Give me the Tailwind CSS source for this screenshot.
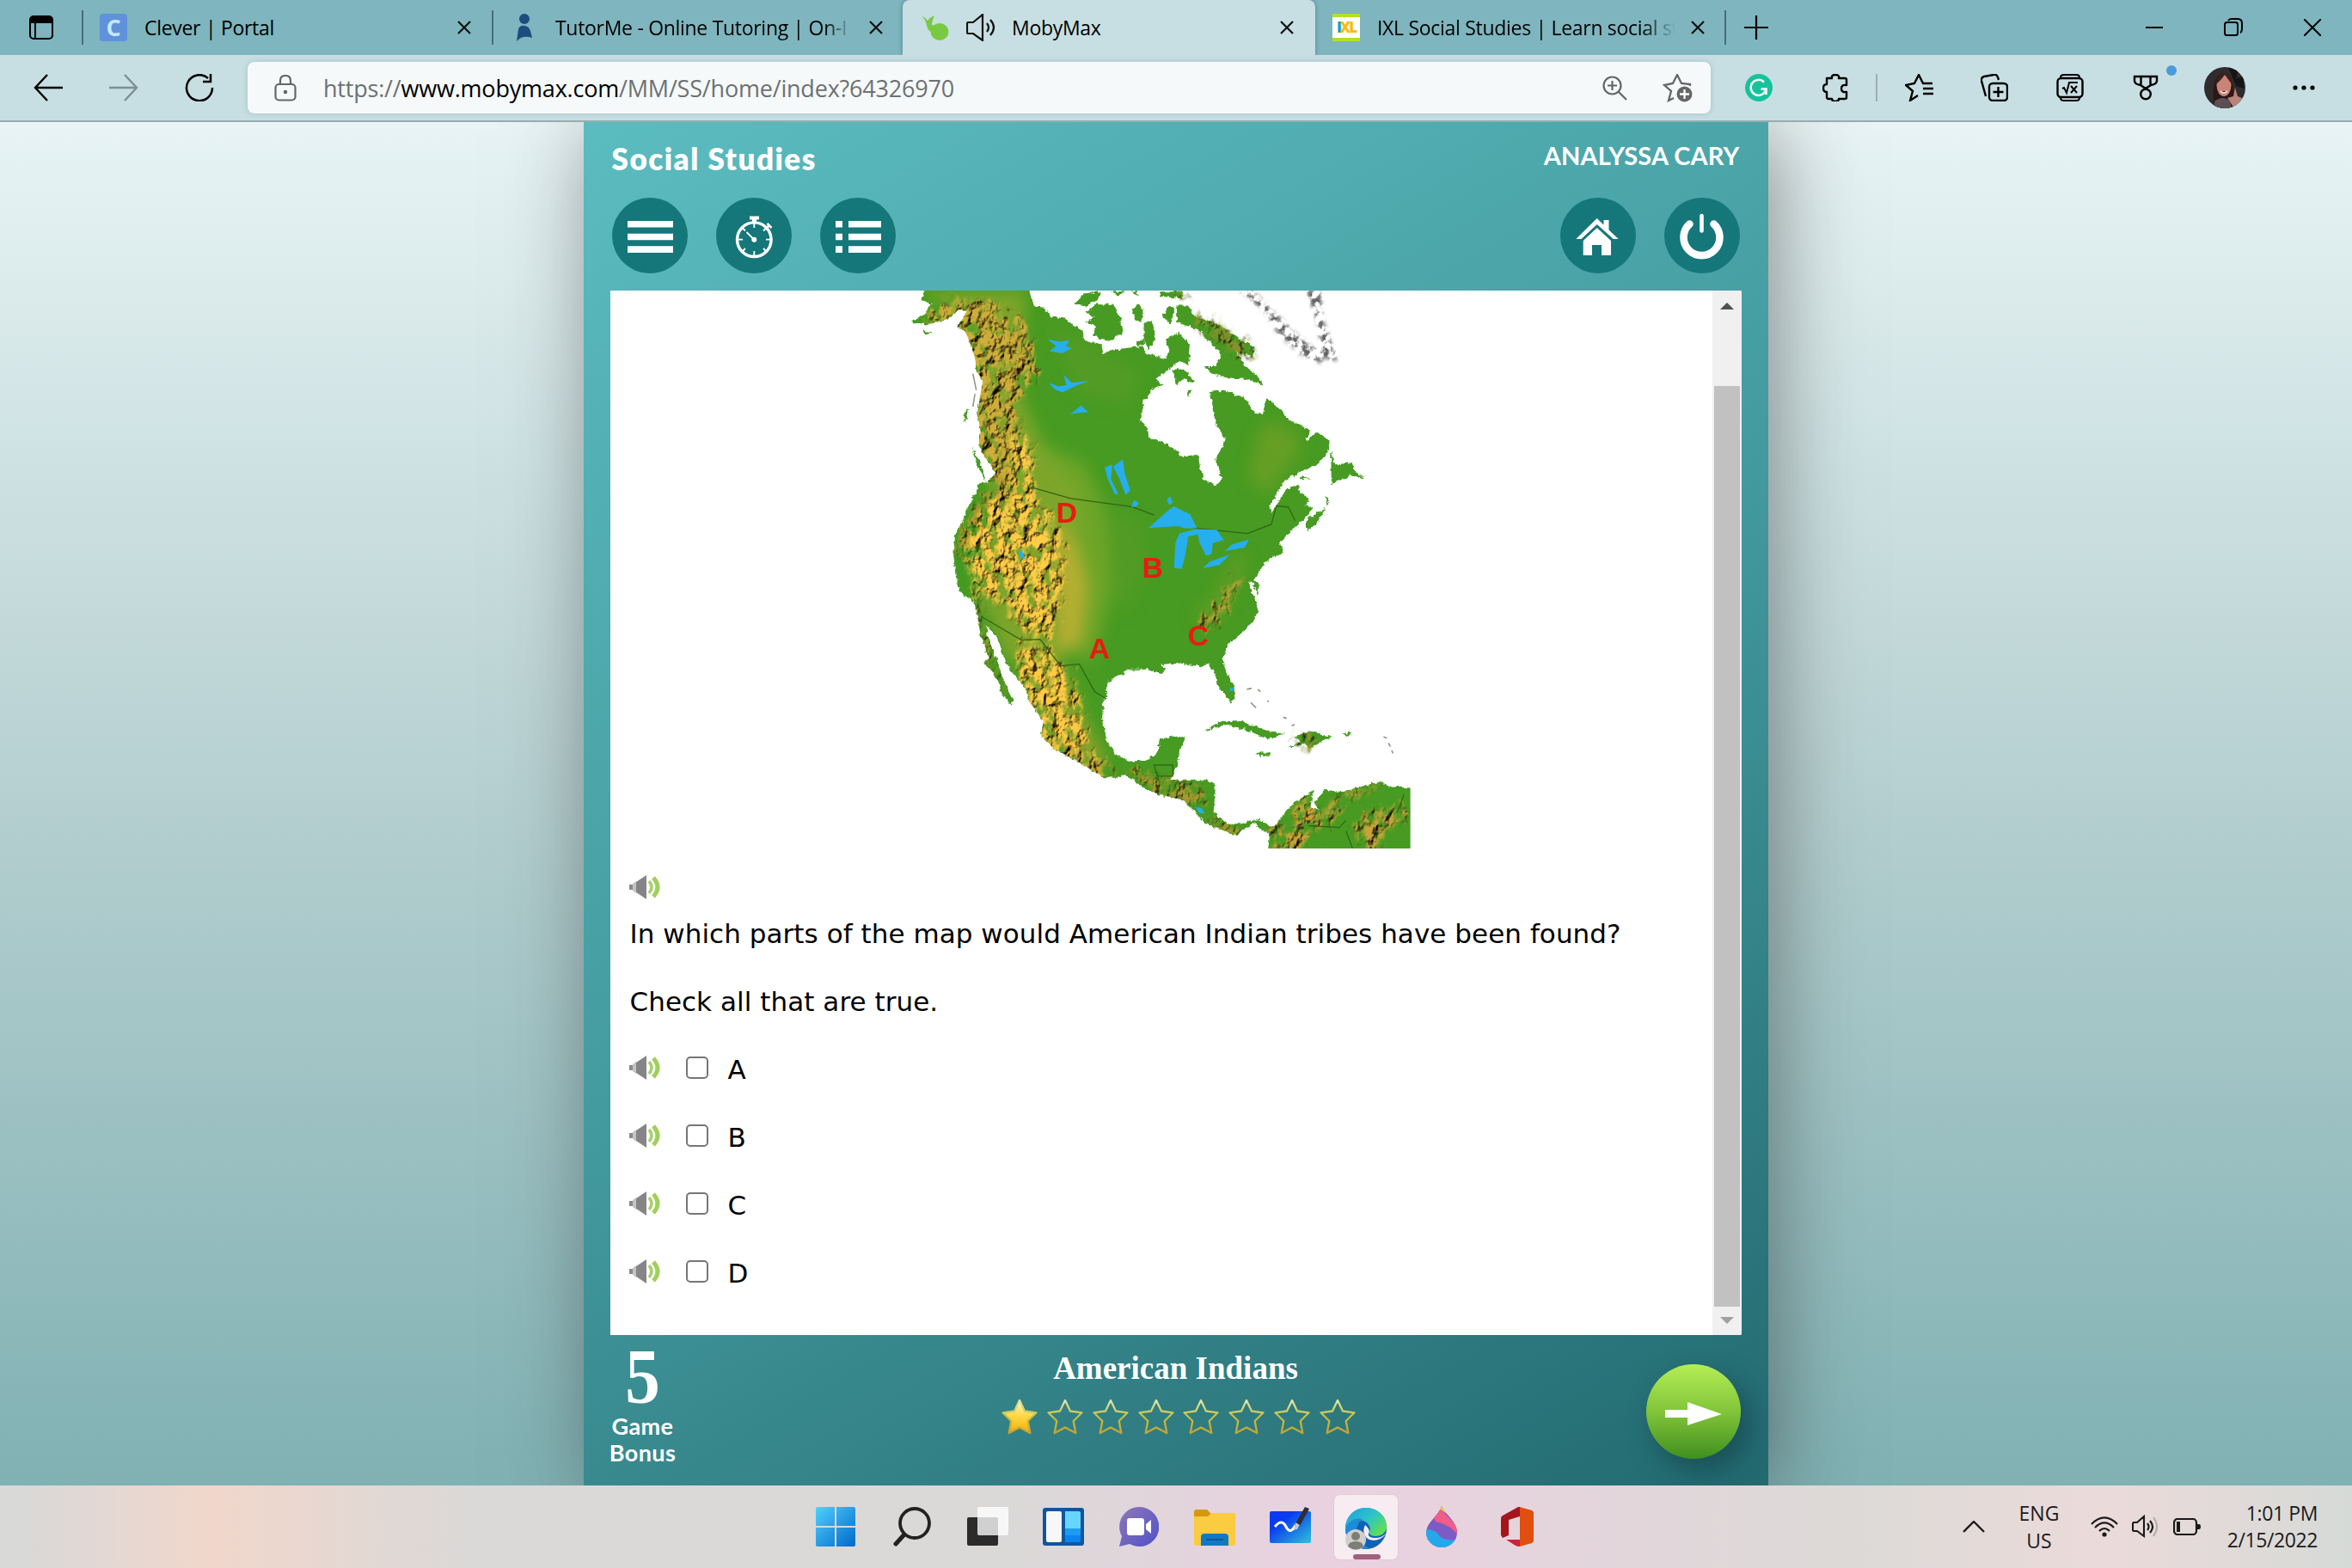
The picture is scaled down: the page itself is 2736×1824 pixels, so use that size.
<!DOCTYPE html>
<html lang="en">
<head>
    <meta charset="UTF-8">
    <meta name="viewport" content="width=device-width, initial-scale=1.0">
    <title>MobyMax</title>
    <script src="https://cdn.jsdelivr.net/npm/@tailwindcss/browser@4"></script>
</head>
<body class="w-[2736px] h-[1824px] overflow-hidden flex flex-col font-['Open_Sans','Noto_Sans',sans-serif] text-black">

    <!-- Shared symbols -->
    <svg class="hidden">
        <symbol id="x" viewBox="0 0 18 18"><path d="M2 2l14 14M16 2L2 16" stroke="#111" stroke-width="2.2" fill="none"/></symbol>
        <symbol id="audio" viewBox="0 0 36 28">
            <path d="M0 11h4v6H0z" fill="#8a8a8a"/><path d="M4 10l4-3v14l-4-3z" fill="#c4c4c4"/>
            <path d="M8 8L20 0v28L8 20z" fill="#858589"/>
            <path d="M23 7q6 7 0 14" stroke="#a5d468" stroke-width="3.600" fill="none"/>
            <path d="M28 3q10 11 0 22" stroke="#a0d05c" stroke-width="5" fill="none"/>
        </symbol>
    </svg>

    <!-- Tab strip -->
    <header class="h-16 shrink-0 bg-[#7eb5be] flex items-center text-[23px] tracking-[-0.3px] whitespace-nowrap">
        <div class="w-[95px] pl-[34px] shrink-0">
            <svg class="w-7 h-7" viewBox="0 0 28 28"><rect x="1" y="1" width="26" height="26" rx="4" fill="none" stroke="#000" stroke-width="2"/><path d="M1 9V5q0-4 4-4h18q4 0 4 4v4z"/><path d="M7 8v19" stroke="#000" stroke-width="2"/></svg>
        </div>
        <div class="w-[479px] h-10 shrink-0 border-x-2 border-[#466e77] flex items-center pl-[19px] pr-[23px]">
            <div class="size-8 rounded bg-[#5f92da] text-[#c5e8fa] font-bold text-[27px] leading-8 text-center">C</div>
            <div class="ml-5 flex-1">Clever | Portal</div>
            <svg class="size-[18px]"><use href="#x"/></svg>
        </div>
        <div class="w-[476px] h-10 shrink-0 flex items-center pl-[26px] pr-[22px]">
            <svg class="w-[20px] h-8 shrink-0" viewBox="0 0 20 32" fill="#1d4d7e"><circle cx="10" cy="6" r="6"/><path d="M1 32L3 18q2-5 7-4 5 0 7 6l2 8q-11-4-18 4z"/></svg>
            <div class="ml-[26px] w-[348px] mask-r-from-90% mask-r-to-99%">TutorMe - Online Tutoring | On-I</div>
            <svg class="size-[18px] ml-auto shrink-0"><use href="#x"/></svg>
        </div>
        <div class="w-[480px] h-16 shrink-0 rounded-t-lg bg-[#c7dfe3] shadow-[0_0_5px_rgba(20,60,70,0.45)] flex items-center pl-[22px] pr-6">
            <svg class="size-8" viewBox="0 0 32 32" fill="#7ac943"><ellipse cx="21" cy="21" rx="10.500" ry="10" /><path d="M12 22C3 16 9 12 0 2q5 3 7 6 3-4 8-6-3 7-3 11l8 2z"/></svg>
            <svg class="w-[34px] h-8 ml-5" viewBox="0 0 34 32" fill="none" stroke="#111" stroke-width="2.200"><path d="M2 10h6L19 1v30L8 23H2q-1 0-1-2v-9q0-2 1-2zM24 11q4 5 0 10M28 7q8 9 0 18"/></svg>
            <div class="ml-[19px] flex-1">MobyMax</div>
            <svg class="size-[18px]"><use href="#x"/></svg>
        </div>
        <div class="w-[478px] h-10 shrink-0 border-r-2 border-[#466e77] flex items-center pl-5 pr-[22px]">
            <div class="size-8 shrink-0 bg-white border-y-4 border-[#b5e021] text-[17px] leading-6 font-extrabold text-center tracking-[-2px] text-[#fdb913]"><span class="text-[#0aa0d8]">I</span>XL</div>
            <div class="ml-5 w-[350px] mask-r-from-88% mask-r-to-99%">IXL Social Studies | Learn social st</div>
            <svg class="size-[18px] ml-auto shrink-0"><use href="#x"/></svg>
        </div>
        <svg class="size-7 ml-[21px]" viewBox="0 0 28 28" stroke="#000" stroke-width="2.200"><path d="M14 0v28M0 14h28"/></svg>
        <div class="ml-auto mr-9 flex items-center gap-[71px]">
            <svg class="w-5 h-5" viewBox="0 0 20 20"><path d="M0 10h20" stroke="#000" stroke-width="2"/></svg>
            <svg class="w-[22px] h-[22px]" viewBox="0 0 22 22" fill="none" stroke="#000" stroke-width="2"><rect x="1" y="5" width="15" height="15" rx="2.500"/><path d="M5 3q1-2 4-2h7q5 0 5 5v6q0 4-2 5"/></svg>
            <svg class="w-5 h-5" viewBox="0 0 20 20"><path d="M0 0l20 20M20 0L0 20" stroke="#000" stroke-width="2"/></svg>
        </div>
    </header>

    <!-- Toolbar -->
    <nav class="relative h-[78px] shrink-0 bg-[#c7dfe3] border-b-2 border-[#9aabb0] flex items-center">
        <svg class="w-[34px] h-8 ml-[39px]" viewBox="0 0 34 32" fill="none" stroke="#000" stroke-width="2.400"><path d="M16 1L2 16l14 15M2 16h32"/></svg>
        <svg class="w-[34px] h-8 ml-[54px]" viewBox="0 0 34 32" fill="none" stroke="#7b9096" stroke-width="2.400"><path d="M18 1l14 15-14 15M32 16H0"/></svg>
        <svg class="w-[34px] h-8 ml-[54px]" viewBox="0 0 34 32" fill="none" stroke="#000" stroke-width="2.500"><path d="M32 16a15 15 0 1 1-5-11M30 0v9h-9"/></svg>
        <div class="ml-[39px] w-[1702px] h-[60px] rounded-lg bg-[#f5f9fa] shadow-[0_0_6px_rgba(60,100,110,0.25)] flex items-center text-[#6d7173]">
            <svg class="w-[26px] h-[31px] ml-[31px]" viewBox="0 0 26 31" fill="none" stroke="#666" stroke-width="2.200"><rect x="1.500" y="11" width="23" height="18.500" rx="4"/><path d="M7 11V7q0-6 6-6t6 6v4"/><circle cx="13" cy="20" r="1.200" fill="#666"/></svg>
            <div class="ml-[31px] flex-1 text-[27px] leading-none tracking-[-0.2px]">https://<span class="text-black">www.mobymax.com</span>/MM/SS/home/index?64326970</div>
            <svg class="w-[29px] h-[29px] mr-[41px]" viewBox="0 0 29 29" fill="none" stroke="#666" stroke-width="2.200"><circle cx="11.500" cy="11.500" r="10"/><path d="M19 19l9 9M11.500 6v11M6 11.500h11"/></svg>
            <svg class="w-9 h-[33px] mr-5" viewBox="0 0 36 33" fill="none" stroke="#666" stroke-width="2.300"><path d="M32 14v-2l-10-1-5-10-5 10-10 2 8 7-3 11 6-3"/><circle cx="25.500" cy="23.500" r="9" fill="#666" stroke="none"/><path d="M25.500 18v11M20 23.500h11" stroke="#fff"/></svg>
        </div>
        <svg class="size-8 ml-10" viewBox="0 0 32 32" fill="none"><circle cx="16" cy="16" r="16" fill="#15c39a"/><path d="M22 9.500a9 9 0 1 0 2.500 8h-6M24.500 17.500v6.500" stroke="#fff" stroke-width="2.500"/></svg>
        <svg class="w-[30px] h-8 ml-[58px]" viewBox="0 0 30 32" fill="none" stroke="#000" stroke-width="2.400" stroke-linejoin="round"><path d="M5 5h6q-1-4 4-4t4 4h7q2 0 2 2v6q-6-1-6 4t6 4v6q0 2-2 2h-7q0 3-4 3t-4-3H7q-2 0-2-2v-6q-4 0-4-4.500T5 12z"/></svg>
        <div class="w-[2px] h-8 bg-[#9aaeb3] ml-[32px]"></div>
        <svg class="w-[33px] h-8 ml-8" viewBox="0 0 33 32" fill="none" stroke="#000" stroke-width="2.400"><path d="M32 11H21L16 1l-5 10-10 2 8 7-3 11 9-6M21 17h12M21 23h12"/></svg>
        <svg class="w-8 h-8 ml-[55px]" viewBox="0 0 32 32" fill="none" stroke="#000" stroke-width="2.400"><rect x="10" y="11" width="21" height="20" rx="4"/><path d="M20.500 15v12M14.500 21h12M6 26L1 8q-1-4 3-5l11-2q4-1 5 3l1 3"/></svg>
        <svg class="w-8 h-8 ml-14" viewBox="0 0 32 32" fill="none" stroke="#000" stroke-width="2.400"><rect x="1.500" y="5" width="29" height="22" rx="4"/><path d="M5 4q0-3 4-3h14q4 0 4 3M5 28q0 3 4 3h14q4 0 4-3M7 17l2-1 3 6 3-12h10M17 14l7 8M24 14l-7 8" stroke-width="2"/></svg>
        <svg class="w-[30px] h-[30px] ml-[57px]" viewBox="0 0 30 30" fill="none" stroke="#000" stroke-width="2.400"><path d="M2 2h26v5q0 4-7 5l-6 4-6-4Q2 11 2 7zM9.500 2v10M20.500 2v10"/><circle cx="15" cy="22.500" r="5.800"/></svg>
        <svg class="size-12 ml-[53px] rounded-full" viewBox="0 0 48 48"><rect width="48" height="48" fill="#302b2d"/><path d="M28 0l12 4-3 9 9-2v14l-9-3z" fill="#151515"/><path d="M12 48Q8 24 15 12q8-11 16 2 5 15 3 34z" fill="#2c1717"/><ellipse cx="23" cy="21" rx="8.500" ry="13" fill="#c98477"/><path d="M14 20q2-14 10-13 8 0 9 14-6-8-9-12-4 6-10 11" fill="#3b201f"/><path d="M19 28q4 4 8 0" stroke="#f2d5d2" stroke-width="2"/><path d="M35 48l-8-12 7-2 2-10 3 10 7 3-5 9z" fill="#b98479"/><path d="M12 40q10-8 18 0l2 8H12z" fill="#5c4f54"/></svg>
        <svg class="w-[28px] h-2 ml-[54px]" viewBox="0 0 28 8"><circle cx="4" cy="4" r="2.600"/><circle cx="14" cy="4" r="2.600"/><circle cx="24" cy="4" r="2.600"/></svg>
        <div class="absolute left-[2520px] top-3 size-3 rounded-full bg-[#4a9bd8]"></div>
    </nav>

    <!-- Lesson page -->
    <main class="h-[1586px] shrink-0 overflow-hidden bg-linear-to-b from-[#e8f4f5] via-[#b5cfd0] to-[#80b1b3] flex justify-center">
        <section class="w-[1378px] -ml-px h-full bg-linear-150 from-[#5bbcbf] via-[#439a9e] to-[#226a70] shadow-[10px_10px_90px_rgba(50,50,50,0.5)] px-[31px] text-white font-['Lato',sans-serif]">
            <div class="h-[88px] flex justify-between px-[2px]">
                <h1 class="text-[35px] leading-[84px] font-extrabold tracking-[1.5px]">Social Studies</h1>
                <div class="text-[29px] leading-[78px] font-bold tracking-[0.1px]">ANALYSSA CARY</div>
            </div>
            <div class="h-[108px] flex gap-[33px] px-[2px]">
                <svg class="size-[88px]" viewBox="0 0 88 88" fill="#fff"><circle cx="44" cy="44" r="44" fill="#15777a"/><path d="M18 27h53v7.500H18zM18 41.700h53v7.500H18zM18 56.300h53V64H18z"/></svg>
                <svg class="size-[88px]" viewBox="0 0 88 88" fill="none" stroke="#fff"><circle cx="44" cy="44" r="44" fill="#15777a" stroke="none"/><circle cx="44.300" cy="48.700" r="19.800" stroke-width="3.400"/><circle cx="44.300" cy="48.700" r="3" fill="#fff" stroke="none"/><path d="M44.300 29v6M44.300 68v-6M25 48.700h6M64 48.700h-6M30.500 35l3.500 3.500M58.500 35L55 38.500M30.500 62.500L34 59M58.500 62.500L55 59M43 47.500l-7.500-7.500" stroke-width="1.800"/><path d="M39 21.500h11v4h-3v4h-5v-4h-3z" fill="#fff" stroke="none"/><path d="M58 36l4-4M59.500 30l5 5" stroke-width="2.500"/></svg>
                <svg class="size-[88px]" viewBox="0 0 88 88" fill="#fff"><circle cx="44" cy="44" r="44" fill="#15777a"/><path d="M18 27h8v7.500h-8zM33 27h38v7.500H33zM18 41.700h8v7.500h-8zM33 41.700h38v7.500H33zM18 56.300h8V64h-8zM33 56.300h38V64H33z"/></svg>
                <svg class="size-[88px] ml-auto" viewBox="0 0 88 88" fill="#fff"><circle cx="44" cy="44" r="44" fill="#15777a"/><path d="M18.300 48L42.700 24l7.800 7.500V26h6v11.500L67.700 48h-6L42.700 31 24.500 48z"/><path d="M26.700 67V50l16-15L59 50v17H48V55H37v12z"/></svg>
                <svg class="size-[88px]" viewBox="0 0 88 88" fill="none" stroke="#fff" stroke-linecap="round"><circle cx="44" cy="44" r="44" fill="#15777a" stroke="none"/><path d="M29.500 30.500a21 21 0 1 0 28 0" stroke-width="8.600"/><path d="M43.500 21v17.500" stroke-width="4.600"/></svg>
            </div>

            <!-- Question -->
            <div class="h-[1215px] bg-white flex text-black rounded-r-[2px] overflow-hidden">
                <div class="flex-1 pl-[22px] font-['DejaVu_Sans',Verdana,sans-serif] text-[31px] leading-[79px] whitespace-nowrap">
                    <div class="relative w-[620px] h-[649px] ml-[308px] font-['Liberation_Sans',Arial,sans-serif] font-bold text-[34px] leading-none text-[#e81c10]">
                        <svg class="w-[620px] h-[649px]" viewBox="0 19 1568 1518" preserveAspectRatio="none">
                            <defs>
                                <filter id="coast" x="-5%" y="-5%" width="110%" height="110%">
                                    <feTurbulence type="fractalNoise" baseFrequency="0.08" numOctaves="3" seed="4"/>
                                    <feDisplacementMap in="SourceGraphic" scale="14" xChannelSelector="R" yChannelSelector="G"/>
                                </filter>
                                <filter id="relief" x="-15%" y="-15%" width="130%" height="130%" color-interpolation-filters="sRGB">
                                    <feTurbulence type="fractalNoise" baseFrequency="0.036 0.028" numOctaves="5" seed="9" result="n"/>
                                    <feColorMatrix in="n" values="0 0 0 0 0  0 0 0 0 0  0 0 0 0 0  1 0 0 0 0" result="h"/>
                                    <feDiffuseLighting in="h" surfaceScale="17" lighting-color="#fff" diffuseConstant="1.300" result="l"><feDistantLight azimuth="225" elevation="50"/></feDiffuseLighting>
                                    <feGaussianBlur in="SourceGraphic" stdDeviation="10" result="g"/>
                                    <feDisplacementMap in="g" in2="n" scale="70" xChannelSelector="R" yChannelSelector="G" result="d"/>
                                    <feColorMatrix in="n" values="0 0 0 0 0  0 0 0 0 0  0 0 0 0 0  0 0 4 0 -1.050" result="gaps"/>
                                    <feComposite in="d" in2="gaps" operator="in" result="p"/>
                                    <feComposite in="l" in2="p" operator="arithmetic" k1="1"/>
                                </filter>
                                <filter id="soft" x="-50%" y="-50%" width="200%" height="200%"><feGaussianBlur stdDeviation="22"/></filter>
                                <filter id="sketch" x="-20%" y="-20%" width="140%" height="140%">
                                    <feTurbulence type="fractalNoise" baseFrequency="0.05" numOctaves="4" result="n"/>
                                    <feColorMatrix in="n" values="0 0 0 0 .12  0 0 0 0 .12  0 0 0 0 .12  5 0 0 0 -2.200" result="k"/>
                                    <feGaussianBlur in="SourceGraphic" stdDeviation="6" result="s"/>
                                    <feComposite in="k" in2="s" operator="in"/>
                                </filter>
                                <clipPath id="frame"><path d="M0 0h1519v1550H0z"/></clipPath>
                                <clipPath id="land">
                                    <path id="coastline" d="M90 10L82 45L110 55L88 85L53 105L100 112L160 95L190 70L215 75L200 100L185 118L210 130L225 165L238 200L245 240L262 265L255 300L245 350L255 400L250 440L265 470L290 500L300 515L275 540L245 545L240 570L215 610L200 650L180 680L175 740L182 800L195 840L235 865L245 900L255 960L280 1020L262 1030L285 1050L310 1090L315 1110L345 1150L350 1135L325 1085L300 1020L275 960L272 930L305 960L320 1010L345 1055L385 1100L400 1140L440 1190L432 1230L470 1265L540 1300L610 1340L650 1345L680 1335L730 1370L780 1390L850 1405L890 1440L910 1465L960 1485L1010 1502L1025 1485L1060 1470L1090 1490L1105 1500L1100 1550L1530 1550V1372L1465 1370L1430 1355L1390 1365L1310 1385L1270 1378L1235 1410L1250 1435L1225 1425L1230 1395L1238 1377L1180 1410L1145 1445L1115 1480L1070 1458L1020 1470L980 1470L940 1440L945 1380L945 1360L910 1350L870 1352L815 1350L835 1305L840 1270L858 1235L820 1232L782 1240L772 1280L740 1297L690 1300L650 1280L625 1240L612 1190L615 1140L625 1125L625 1090L650 1070L675 1065L685 1050L750 1050L790 1062L800 1045L785 1037L830 1032L900 1042L925 1035L945 1060L950 1090L990 1140L1005 1130L1000 1095L970 1040L968 1015L985 980L1030 945L1060 915L1070 890L1060 850L1040 815L1055 810L1070 850L1075 815L1060 805L1085 765L1110 745L1145 735L1135 705L1160 680L1190 655L1215 630L1235 612L1210 605L1220 590L1190 560L1195 545L1155 560L1110 625L1105 605L1150 535L1200 510L1250 490L1280 450L1278 425L1245 402L1210 430L1225 398L1160 370L1130 335L1095 312L1085 355L1060 350L1030 310L970 290L928 295L940 340L945 380L975 425L945 480L965 530L945 550L910 530L900 500L895 465L850 470L800 435L750 420L745 390L725 375L735 320L760 290L790 275L770 258L800 240L835 215L865 195L860 150L820 140L800 160L810 180L800 205L740 190L730 170L650 180L615 190L610 165L560 155L555 130L500 95L460 90L440 65L410 60L395 10Z"/>
                                </clipPath>
                            </defs>
                            <g clip-path="url(#frame)">
                            <g filter="url(#coast)" fill="#469b22">
                                <use href="#coastline"/>
                                <!-- arctic islands -->
                                <path d="M532 55l25-28 50-5-5 20-40 20zM565 80l30-25 50 0 20 40 10 40-40 20-50-10 10-30-30-10 25-15zM700 70l20-15 15 15-5 35-20-5zM640 22h40l-20 10zM735 105l25-5 10 50-20 30-15-30zM710 155l25-5 5 15-20 5zM790 90l20-30 15 10-10 40zM830 60l35 0 20 30 70 20 60 40 45 20-5 30-50-15 30 40 30 25 20 25-50-15-60-5-40-10-20-20 30 0 20-30-40-40-30-30-65-20zM780 22h70l-5 18-60-5zM800 150l40-15 30 30-5 55-40-15zM820 235l25-5 45 40-40-10-20 20zM700 20h15v15z"/>
                                <!-- islands and peninsulas off the east coast -->
                                <path d="M1285 450l10 40 50-2 15 25 22 15-40-5-55 22zM1215 640l55-30-25 40-25 22-10-10zM1195 525l35 5-35 2zM1268 575l15 15-10 15zM230 445l28 50 12 45-25-45z"/>
                                <path d="M915 1218l50-28 60 2 65 22 60 12-50 13-60-23-60-17zM1178 1232l45-14 66 15-40 18-22 14-20-12-47 8 38-15zM1068 1276l40 0-5 10-30 0zM1318 1225l28-5-12 12zM85 128l30 5-20 6zM205 350l15-5-10 35zM862 295l15-5-10 18z"/>
                            </g>
                            <g clip-path="url(#land)">
                                <g filter="url(#soft)">
                                    <path d="M60 20H390L370 300L460 480L530 560L560 800L530 1000L480 1030L330 1030L260 860L290 540L230 90z" fill="#8fa82c" opacity=".75"/>
                                    <path d="M370 1000l90 20 60 60 50 120 60 100-60 20-120-90z" fill="#a5a62f" opacity=".7"/>
                                    <path d="M410 430l150 60 60 120 20 230-60 200-70-60V560z" fill="#84aa2c" opacity=".65"/>
                                    <path d="M480 640l60 90 30 90-20 160-70 20z" fill="#c8b136" opacity=".75"/>
                                    <path d="M1080 380l90 10 30 60-100 120-60-40zM870 910l70-50 70-120 30 10-80 160z" fill="#7ba129" opacity=".6"/>
                                    <path d="M450 100l120 60 160 90-40 80-150-30z" fill="#5a9d26" opacity=".6"/>
                                    <path d="M640 600l90 60 10 120-60 120-50-120z" fill="#5a9d26" opacity=".6"/>
                                    <path d="M190 690l25-20 15 120-15 60-30-60z" fill="#3f9a22"/>
                                </g>
                                <g filter="url(#relief)">
                                    <path d="M90 60l120-10 70 0 110 60 20 60 5 80-55 60 0 90 35 130 20 90-80 0-80-110-20-150-20-100-20-120-100-40z" fill="#cfae3a"/>
                                    <path d="M345 420l50 0 15 90 10 90 65 60 15 80-10 130-20 80-60 20-100-110-60-10-20-50-40-110 20-60 70-50 70 10 10-60z" fill="#ffcc46"/>
                                    <path d="M240 630l210 0 40 90-10 120-60 50-100-50-70-40-30-90z" fill="#ffcc46"/>
                                    <path d="M370 980l90 20 50 60 40 90 20 120 60 60 20 50-40 0-100-40-80-90-40-140-30-60z" fill="#ffcb44"/>
                                    <path d="M180 740l25-90 90-120 40-20-40 80-70 90-10 60zM240 870l15 0 35 170 60 100-40-50-40-70zM440 1230l80 40 130 70-10 12-110-50zM680 1320l50 0 50 35 90 5 50 30-20 30-120-25zM930 1450l70 22 30 20-10 20-80-28z" fill="#ad982e"/>
                                    <path d="M1180 1410l40-10 30 50-60 110h-40l30-80zM1110 1480h60v60h-60zM1240 1450l70-60 140-32-130 55-80 80zM1345 1480l60-40 90-15 40 20-90 35-10 50-30 20zM890 945l60-70 50-80 20 10-60 100-50 45z" fill="#c9a437"/>
                                </g>
                            </g>
                            <g filter="url(#relief)"><path d="M880 85l60 20 50 40 60 20 8 40-65-20-50-40-60-30zM820 12h40v24zM1180 1236l55-6 15 26-40 10z" fill="#8f922c"/></g>
                            <!-- borders -->
                            <path d="M400 553L520 585L700 607L765 630M880 665L1040 680L1110 655L1125 605L1160 608L1180 645M255 905L375 970L430 968L490 1040L545 1035L590 1110L625 1130M765 1310h55v30h-45zM1220 1475l90 5 20-20M1330 1490l20 50M1480 1440l20-50" fill="none" stroke="#2f6512" stroke-width="3"/>
                            <!-- lakes -->
                            <g fill="#27aeef">
                                <path d="M452 152l35 6 30-4-12 16 18 6-28 14-38-6 20-14zM455 270l30 10 22-4-8-28 24 22 52-6-40 14-40 18-22-8zM518 356l32-24 22 18-30 2z"/>
                                <path d="M620 500l22-8-4 40 22 40-10 2-22-45zM645 498l28-20 6 40 16 45-14 12-18-45zM698 608l8-18 14 6-6 10zM802 590l10-12 8 18-10 6zM748 665l55-45 20-14 48 22 20 38-36 0-20-6z"/>
                                <path d="M824 768l4-64 12-24 50-12 60 2 20 28-32 8-4 30-16 4-20-36-4-22-28 6-10 54-10 34-22-2zM908 775l20-18 60-20-30 28zM974 728l20-18 50-14-12 22zM366 726l12 4 8 18-14-2zM886 1424l20 4 8 14-16-2zM988 1100h10v8h-10z"/>
                            </g>
                            <!-- Greenland and small islands -->
                            <path d="M1015 18l40 0 75 70 60 55 70 50 0 24-60-20-70-60-40-60zM1220 40l-8-22h42l8 80 44 112-52-10 0-40-10-60z" filter="url(#sketch)"/>
                            <path d="M232 245l10 45M238 300l-6 35M1050 1140l15 14M1038 1104l14-3M1070 1104l8 6M1098 1136h5M1145 1180l10 3M1170 1203l8-3M1440 1233l10 4M1455 1250l5 10M1464 1270l4 8" stroke="#8f9689" stroke-width="4"/>
                            </g>
                        </svg>
                        <span class="absolute left-[189px] top-[241px]">D</span>
                        <span class="absolute left-[289px] top-[305px]">B</span>
                        <span class="absolute left-[342px] top-[384px]">C</span>
                        <span class="absolute left-[227px] top-[399px]">A</span>
                    </div>
                    <svg class="w-9 h-7 mt-[31px] mb-[1px]"><use href="#audio"/></svg>
                    <p class="ml-px tracking-[0.05px]">In which parts of the map would American Indian tribes have been found?</p>
                    <p class="ml-px tracking-[0.05px]">Check all that are true.</p>
                    <div id="answers"></div>
                </div>
                <div class="w-[34px] bg-[#f0f0f0] flex flex-col items-center">
                    <svg class="w-4 h-2 mt-[14px]" viewBox="0 0 16 8"><path d="M0 8l8-8 8 8z" fill="#505050"/></svg>
                    <div class="w-[30px] h-[1071px] mt-[89px] bg-[#c1c1c1]"></div>
                    <svg class="w-4 h-2 mt-3" viewBox="0 0 16 8"><path d="M0 0l8 8 8-8z" fill="#a0a0a0"/></svg>
                </div>
            </div>

            <!-- Progress -->
            <div class="h-[175px] flex justify-between">
                <div class="w-[240px]">
                    <div class="w-[76px] h-[81px] pt-[13px] text-center font-['Liberation_Serif',serif] font-bold text-[90px] leading-[72px]"><span class="inline-block scale-x-90">5</span></div>
                    <div class="w-[80px] -ml-0.5 pt-[9px] text-center text-[27px] leading-[31px] font-bold tracking-[0.4px]">Game<br>Bonus</div>
                </div>
                <div class="flex flex-col items-center">
                    <h2 class="mt-[16px] font-['Liberation_Serif',serif] font-bold text-[37px] leading-[46px]">American Indians</h2>
                    <div id="stars" class="flex gap-[10.800px] mt-[12px] ml-[7px]"></div>
                </div>
                <div class="w-[240px] flex justify-end pt-[34px]">
                    <div class="size-[110px] rounded-full bg-linear-to-b from-[#b4ee55] via-[#82c53a] to-[#3f8f1f] shadow-[10px_14px_30px_rgba(20,60,70,0.6)]">
                        <svg class="size-[110px]" viewBox="0 0 110 110"><path d="M22 53h26v-9l40 14-40 13v-9H22z" fill="#fff"/></svg>
                    </div>
                </div>
            </div>
        </section>
    </main>

    <!-- Taskbar -->
    <footer class="relative h-24 shrink-0 flex items-center pl-[949px] text-[23px] text-[#1a1a1a] bg-[#dad9d8]">
        <div class="absolute inset-0 bg-linear-to-r from-[#d9d9d8] from-1% via-[#f1d6cb] via-9% to-[#dad9d8] to-20%"></div>
        <div class="absolute left-[1160px] inset-y-0 w-[1000px] bg-linear-to-r from-[#dad9d8] via-[#ead1e0] via-40% to-[#dcdad7]"></div>
        <div class="absolute left-[2160px] inset-y-0 w-[576px] bg-linear-to-r from-[#dcdad7] via-[#ebdada] to-[#d6dad7]"></div>
        <svg class="relative w-[46px] h-[46px]" viewBox="0 0 46 46"><defs><linearGradient id="win" x2="1" y2="1"><stop stop-color="#51d0ff"/><stop offset="1" stop-color="#0068c8"/></linearGradient></defs><path d="M2 0h20v22H0V2q0-2 2-2zM24 0h20q2 0 2 2v20H24zM0 24h22v22H2q-2 0-2-2zM24 24h22v20q0 2-2 2H24z" fill="url(#win)"/></svg>
        <svg class="relative w-[44px] h-[46px] ml-[44px]" viewBox="0 0 44 46" fill="none" stroke="#222" stroke-linecap="round"><circle cx="25" cy="19" r="17" stroke-width="3.800"/><path d="M13 32L3 43" stroke-width="5"/></svg>
        <svg class="relative w-[48px] h-[46px] ml-[42px]" viewBox="0 0 48 46"><rect y="12" width="36" height="33" rx="2" fill="#2b2b2b"/><rect x="12" y="0" width="36" height="33" rx="2" fill="#fff" opacity=".78"/></svg>
        <svg class="relative w-[48px] h-[46px] ml-[40px]" viewBox="0 0 48 46"><rect y="1" width="48" height="44" rx="3" fill="#10559e"/><rect x="4" y="5" width="18" height="36" rx="2" fill="#f7f7f7"/><path d="M26 5h16q2 0 2 2v18H26z" fill="#67d6fc"/><path d="M26 25h18v8H26z" fill="#1d9bf0"/><path d="M26 33h18v6q0 2-2 2H26z" fill="#0a84ee"/></svg>
        <svg class="relative w-[46px] h-[46px] ml-[41px]" viewBox="0 0 46 46"><defs><linearGradient id="chat" x2="1" y2="1"><stop stop-color="#9078b8"/><stop offset="1" stop-color="#4f50c8"/></linearGradient></defs><path d="M23 0a23 23 0 1 1-11 43L0 46l3-12A23 23 0 0 1 23 0z" fill="url(#chat)"/><rect x="9" y="13" width="20" height="20" rx="3" fill="#fff"/><path d="M31 20l6-5v16l-6-5z" fill="#fff"/></svg>
        <svg class="relative w-[48px] h-[46px] ml-[41px]" viewBox="0 0 48 46"><path d="M0 6q0-3 3-3h12l5 5-5 6H0z" fill="#d5970c"/><path d="M0 11h16l4-4h26q2 0 2 2v34q0 2-2 2H2q-2 0-2-2z" fill="#fbcb41"/><path d="M8 45V35q0-4 4-4h24q4 0 4 4v10z" fill="#1378c4"/><path d="M14 38h20" stroke="#0b5a9c" stroke-width="2"/></svg>
        <svg class="relative w-[48px] h-[46px] ml-[40px]" viewBox="0 0 48 46"><defs><linearGradient id="board" x2="1" y2="1"><stop offset=".3" stop-color="#0a3bf0"/><stop offset="1" stop-color="#2cc3d8"/></linearGradient></defs><rect y="5" width="48" height="37" rx="2" fill="url(#board)"/><path d="M6 23q8-10 13 0t11-2" stroke="#fff" stroke-width="3" fill="none"/><path d="M41 0l5 2-12 22-4 2-1-5z" fill="#2d2d35"/><path d="M30 18l5 3-3 5-4 1z" fill="#b9c9dc"/></svg>
        <div class="relative ml-[26px] w-[76px] h-[77px] rounded-lg bg-[#f6ecf2] border border-[#e2ccd8] flex justify-center pt-[14px]">
            <svg class="w-[50px] h-[50px]" viewBox="0 0 50 50"><defs><linearGradient id="edge" x2="1" y2=".7"><stop stop-color="#1e9de0"/><stop offset=".55" stop-color="#2cc3c9"/><stop offset="1" stop-color="#63df50"/></linearGradient></defs><circle cx="25" cy="25" r="24" fill="#1062b4"/><path d="M1 25C2 9 13 1 25 1c14 0 24 10 24 21 0 8-6 12-13 12-5 0-8-2-7-5 2-4 0-10-7-13-8-2-16 2-21 9z" fill="url(#edge)"/><path d="M1 25c4-9 12-13 20-11-7 5-9 15-4 23 4 7 9 11 14 11C14 52 1 40 1 25z" fill="#1f8bd6"/><path d="M24 21c4 3 6 7 4 10-1 3 3 5 8 5 5 0 9-2 12-5-4 7-14 10-21 6-5-4-6-10-3-16z" fill="#f6ecf2"/><circle cx="13" cy="38" r="12" fill="#cfcfcb"/><circle cx="13" cy="34" r="5" fill="#7d7d7a"/><path d="M4 46q1-6 9-6t9 6q-9 7-18 0z" fill="#7d7d7a"/></svg>
            <div class="absolute left-[22px] bottom-0 w-8 h-1.5 rounded-full bg-[#a35f7d]"></div>
        </div>
        <svg class="relative w-[38px] h-[48px] ml-[31px]" viewBox="0 0 38 48"><defs><clipPath id="drop"><path d="M19 0c3 9 18 17 18 31a18 17 0 0 1-36 0C1 19 15 12 19 0z"/></clipPath></defs><g clip-path="url(#drop)"><path d="M0 0h38v48H0z" fill="#7d5bc4"/><path d="M12 0h26v18z" fill="#fccb1c"/><path d="M8 9l10-5 20 20v10q-8-12-26-16z" fill="#ef5e88"/><path d="M0 27q12 0 16 7t22 5v9H0z" fill="#23a9ea"/></g></svg>
        <svg class="relative w-[38px] h-[46px] ml-[50px]" viewBox="0 0 38 46"><path d="M22 0l14 4q2 1 2 3v32q0 2-2 3l-14 4z" fill="#e04f10"/><path d="M22 0v11L9 15v18l-7 3-2-3V13q0-2 2-3L20 0z" fill="#a5161c"/><path d="M6 38l16 0v8q-3 0-5-1z" fill="#cf2238"/></svg>

        <div class="relative ml-auto mr-10 flex items-center">
            <svg class="w-[26px] h-[14px]" viewBox="0 0 26 14" fill="none" stroke="#1a1a1a" stroke-width="2.300"><path d="M1 13L13 1l12 12"/></svg>
            <div class="ml-[36px] w-[54px] text-center leading-8">ENG<br>US</div>
            <svg class="w-8 h-6 ml-[33px]" viewBox="0 0 32 24" fill="none" stroke="#1a1a1a" stroke-width="2.200"><path d="M1 9q15-15 30 0M5 13q11-11 22 0M10 17q6-6 12 0"/><circle cx="16" cy="21" r="2.600" fill="#1a1a1a" stroke="none"/></svg>
            <svg class="w-8 h-7 ml-4" viewBox="0 0 32 28" fill="none" stroke="#1a1a1a" stroke-width="2.100"><path d="M2 9h4l8-7v23l-8-6H2q-1 0-1-2v-6q0-2 1-2zM18 10q3 4 0 8M21 7q6 7 0 14"/><path d="M25 3q8 11 0 22" stroke="#b9abab"/></svg>
            <svg class="w-8 h-5 ml-4" viewBox="0 0 32 20" fill="none" stroke="#1a1a1a" stroke-width="2.200"><rect x="1" y="1" width="26" height="18" rx="4"/><path d="M28 7h2q2 0 2 3t-2 3h-2z" fill="#1a1a1a" stroke="none"/><path d="M4 4h4v12H4z" fill="#1a1a1a" stroke="none"/></svg>
            <div class="ml-[22px] w-[114px] text-right leading-[31px] tracking-[-0.4px]">1:01 PM<br>2/15/2022</div>
        </div>
    </footer>

    <script>
        const answers = ["A", "B", "C", "D"];

        document.getElementById("answers").innerHTML = answers.map(letter => `
            <label class="flex items-center h-[79px]">
                <svg class="w-9 h-7 mb-1.5"><use href="#audio"/></svg>
                <input type="checkbox" class="appearance-none size-[26px] ml-[30px] mb-1.5 border-2 border-[#767676] rounded-[5px] bg-white">
                <span class="ml-[23px]">${letter}</span>
            </label>
        `).join("");

        // Eight stars, one earned
        const earned = 1;
        let stars = `<svg class="absolute size-0"><defs><linearGradient id="gold" x2="0" y2="1"><stop stop-color="#fff6c8"/><stop offset=".5" stop-color="#ffd640"/><stop offset="1" stop-color="#f2ab10"/></linearGradient><linearGradient id="rim" x2="0" y2="1"><stop stop-color="#dfe6b0"/><stop offset=".5" stop-color="#c3bf3e"/><stop offset="1" stop-color="#c9a32e"/></linearGradient></defs></svg>`;
        for (let i = 0; i < 8; i++) {
            stars += `<svg class="w-[42px] h-[42px]" viewBox="0 0 42 42"><path d="M21 2l6 12.500 13.500 1.800-9.800 9.700 2.600 14L21 33.500 8.700 40l2.600-14L1.500 16.300 15 14.500z" stroke-width="2.300" stroke-linejoin="round" stroke="url(#rim)" fill="${i < earned ? "url(#gold)" : "none"}"/></svg>`;
        }
        document.getElementById("stars").innerHTML = stars;
    </script>
</body>
</html>
